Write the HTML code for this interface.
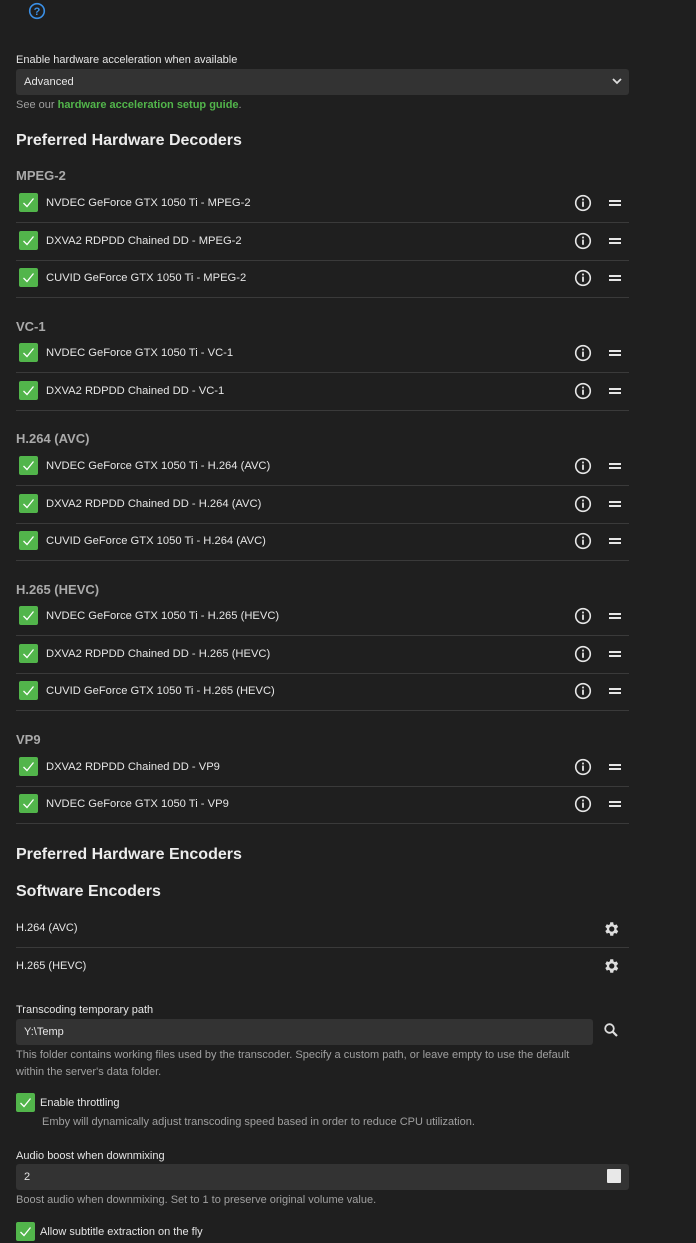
<!DOCTYPE html>
<html><head><meta charset="utf-8">
<style>
*{margin:0;padding:0;box-sizing:border-box}
body{width:696px;height:1243px;background:#1f1f1f;font-family:"Liberation Sans",sans-serif;color:#e6e6e6;position:relative;overflow:hidden}
.a{position:absolute;white-space:nowrap}
.t{font-size:11.2px;color:#e6e6e6}
.h{font-size:16px;font-weight:bold;color:#ececec}
.s{font-size:13px;font-weight:bold;color:#aaa}
.sep{position:absolute;left:16px;width:613px;height:1px;background:#3a3a3a}
.cb{position:absolute;width:19px;height:19px;background:#52b54b;border-radius:2px}
.cb svg{position:absolute;left:3px;top:3px}
.ic{position:absolute}
.g{font-size:11px;color:#a0a0a0}
.inp{position:absolute;background:#333;border-radius:3px}
</style></head><body>
<svg class="ic" style="left:28px;top:2px" width="18" height="18" viewBox="0 0 18 18"><circle cx="9" cy="9" r="7.3" fill="none" stroke="#3a8fe6" stroke-width="1.6"/><text x="9" y="13" text-anchor="middle" font-family="Liberation Sans" font-weight="bold" font-size="11" fill="#3a8fe6">?</text></svg>

<div class="a t" style="left:16px;top:54px;font-size:11px">Enable hardware acceleration when available</div>
<div class="inp" style="left:16px;top:69px;width:613px;height:26px"></div>
<div class="a t" style="left:24px;top:76px">Advanced</div>
<svg class="ic" style="left:612px;top:77px" width="10" height="8" viewBox="0 0 10 8"><path d="M1 2 L5 6 L9 2" fill="none" stroke="#ddd" stroke-width="1.8"/></svg>
<div class="a g" style="left:16px;top:99px">See our <span style="color:#52b54b;font-weight:bold">hardware acceleration setup guide</span>.</div>

<div class="a h" style="left:16px;top:132px">Preferred Hardware Decoders</div>

<div id="rows"></div>

<div class="a h" style="left:16px;top:846px">Preferred Hardware Encoders</div>
<div class="a h" style="left:16px;top:883px">Software Encoders</div>

<div class="a t" style="left:16px;top:922px;font-size:11px">H.264 (AVC)</div>
<div class="sep" style="top:947px"></div>
<div class="a t" style="left:16px;top:960px;font-size:11px">H.265 (HEVC)</div>
<svg class="ic" style="left:602px;top:920px" width="18" height="18" viewBox="0 0 24 24"><path fill="#ddd" d="M19.4 13a7.6 7.6 0 000-2l2.1-1.6-2-3.5-2.5 1a7.3 7.3 0 00-1.7-1L15 3h-4l-.4 2.7a7.3 7.3 0 00-1.7 1l-2.5-1-2 3.5L6.5 11a7.6 7.6 0 000 2l-2.1 1.6 2 3.5 2.5-1a7.3 7.3 0 001.7 1L11 21h4l.4-2.7a7.3 7.3 0 001.7-1l2.5 1 2-3.5zM13 15.5a3.5 3.5 0 110-7 3.5 3.5 0 010 7z"/></svg>
<svg class="ic" style="left:602px;top:957px" width="18" height="18" viewBox="0 0 24 24"><path fill="#ddd" d="M19.4 13a7.6 7.6 0 000-2l2.1-1.6-2-3.5-2.5 1a7.3 7.3 0 00-1.7-1L15 3h-4l-.4 2.7a7.3 7.3 0 00-1.7 1l-2.5-1-2 3.5L6.5 11a7.6 7.6 0 000 2l-2.1 1.6 2 3.5 2.5-1a7.3 7.3 0 001.7 1L11 21h4l.4-2.7a7.3 7.3 0 001.7-1l2.5 1 2-3.5zM13 15.5a3.5 3.5 0 110-7 3.5 3.5 0 010 7z"/></svg>

<div class="a t" style="left:16px;top:1004px;font-size:11px">Transcoding temporary path</div>
<div class="inp" style="left:16px;top:1019px;width:577px;height:26px"></div>
<div class="a t" style="left:24px;top:1026px;font-size:11px">Y:\Temp</div>
<svg class="ic" style="left:603px;top:1022px" width="16" height="16" viewBox="0 0 16 16"><circle cx="6.5" cy="6.5" r="4.3" fill="none" stroke="#ddd" stroke-width="1.8"/><path d="M9.7 9.7 L14 14" stroke="#ddd" stroke-width="2.2"/></svg>
<div class="a g" style="left:16px;top:1049px">This folder contains working files used by the transcoder. Specify a custom path, or leave empty to use the default</div>
<div class="a g" style="left:16px;top:1066px">within the server's data folder.</div>

<div class="cb" style="left:16px;top:1093px"><svg width="13" height="13" viewBox="0 0 13 13"><path d="M1.5 7 L5 10.5 L11.5 2.5" fill="none" stroke="#fff" stroke-width="1.3"/></svg></div>
<div class="a t" style="left:40px;top:1097px;font-size:11px">Enable throttling</div>
<div class="a g" style="left:42px;top:1116px">Emby will dynamically adjust transcoding speed based in order to reduce CPU utilization.</div>

<div class="a t" style="left:16px;top:1150px;font-size:11px">Audio boost when downmixing</div>
<div class="inp" style="left:16px;top:1164px;width:613px;height:26px"></div>
<div class="a t" style="left:24px;top:1171px;font-size:11px">2</div>
<div class="a" style="left:607px;top:1169px;width:14px;height:14px;background:#e8e8e8;border-radius:1px"></div>
<div class="a g" style="left:16px;top:1194px">Boost audio when downmixing. Set to 1 to preserve original volume value.</div>

<div class="cb" style="left:16px;top:1222px"><svg width="13" height="13" viewBox="0 0 13 13"><path d="M1.5 7 L5 10.5 L11.5 2.5" fill="none" stroke="#fff" stroke-width="1.3"/></svg></div>
<div class="a t" style="left:40px;top:1226px;font-size:11px">Allow subtitle extraction on the fly</div>

<script>
var data=[
["MPEG-2",175,[[203,"NVDEC GeForce GTX 1050 Ti - MPEG-2"],[241,"DXVA2 RDPDD Chained DD - MPEG-2"],[278,"CUVID GeForce GTX 1050 Ti - MPEG-2"]]],
["VC-1",326,[[353,"NVDEC GeForce GTX 1050 Ti - VC-1"],[391,"DXVA2 RDPDD Chained DD - VC-1"]]],
["H.264 (AVC)",438,[[466,"NVDEC GeForce GTX 1050 Ti - H.264 (AVC)"],[504,"DXVA2 RDPDD Chained DD - H.264 (AVC)"],[541,"CUVID GeForce GTX 1050 Ti - H.264 (AVC)"]]],
["H.265 (HEVC)",589,[[616,"NVDEC GeForce GTX 1050 Ti - H.265 (HEVC)"],[654,"DXVA2 RDPDD Chained DD - H.265 (HEVC)"],[691,"CUVID GeForce GTX 1050 Ti - H.265 (HEVC)"]]],
["VP9",739,[[767,"DXVA2 RDPDD Chained DD - VP9"],[804,"NVDEC GeForce GTX 1050 Ti - VP9"]]]
];
var h="";
data.forEach(function(s){
 h+='<div class="a s" style="left:16px;top:'+(s[1]-7)+'px">'+s[0]+'</div>';
 s[2].forEach(function(r){
  var y=r[0];
  h+='<div class="cb" style="left:19px;top:'+(y-10)+'px"><svg width="13" height="13" viewBox="0 0 13 13"><path d="M1.5 7 L5 10.5 L11.5 2.5" fill="none" stroke="#fff" stroke-width="1.3"/></svg></div>';
  h+='<div class="a t" style="left:46px;top:'+(y-6)+'px">'+r[1]+'</div>';
  h+='<svg class="ic" style="left:574px;top:'+(y-9)+'px" width="18" height="18" viewBox="0 0 18 18"><circle cx="9" cy="9" r="7.3" fill="none" stroke="#e6e6e6" stroke-width="1.6"/><rect x="8.1" y="7.6" width="1.8" height="5.2" fill="#e6e6e6"/><rect x="8.1" y="4.6" width="1.8" height="1.8" fill="#e6e6e6"/></svg>';
  h+='<div class="a" style="left:609px;top:'+(y-3)+'px;width:12px;height:2px;background:#e6e6e6"></div><div class="a" style="left:609px;top:'+(y+1)+'px;width:12px;height:2px;background:#e6e6e6"></div>';
  h+='<div class="sep" style="top:'+(y+19)+'px"></div>';
 });
});
document.getElementById("rows").outerHTML=h;
</script>
</body></html>
